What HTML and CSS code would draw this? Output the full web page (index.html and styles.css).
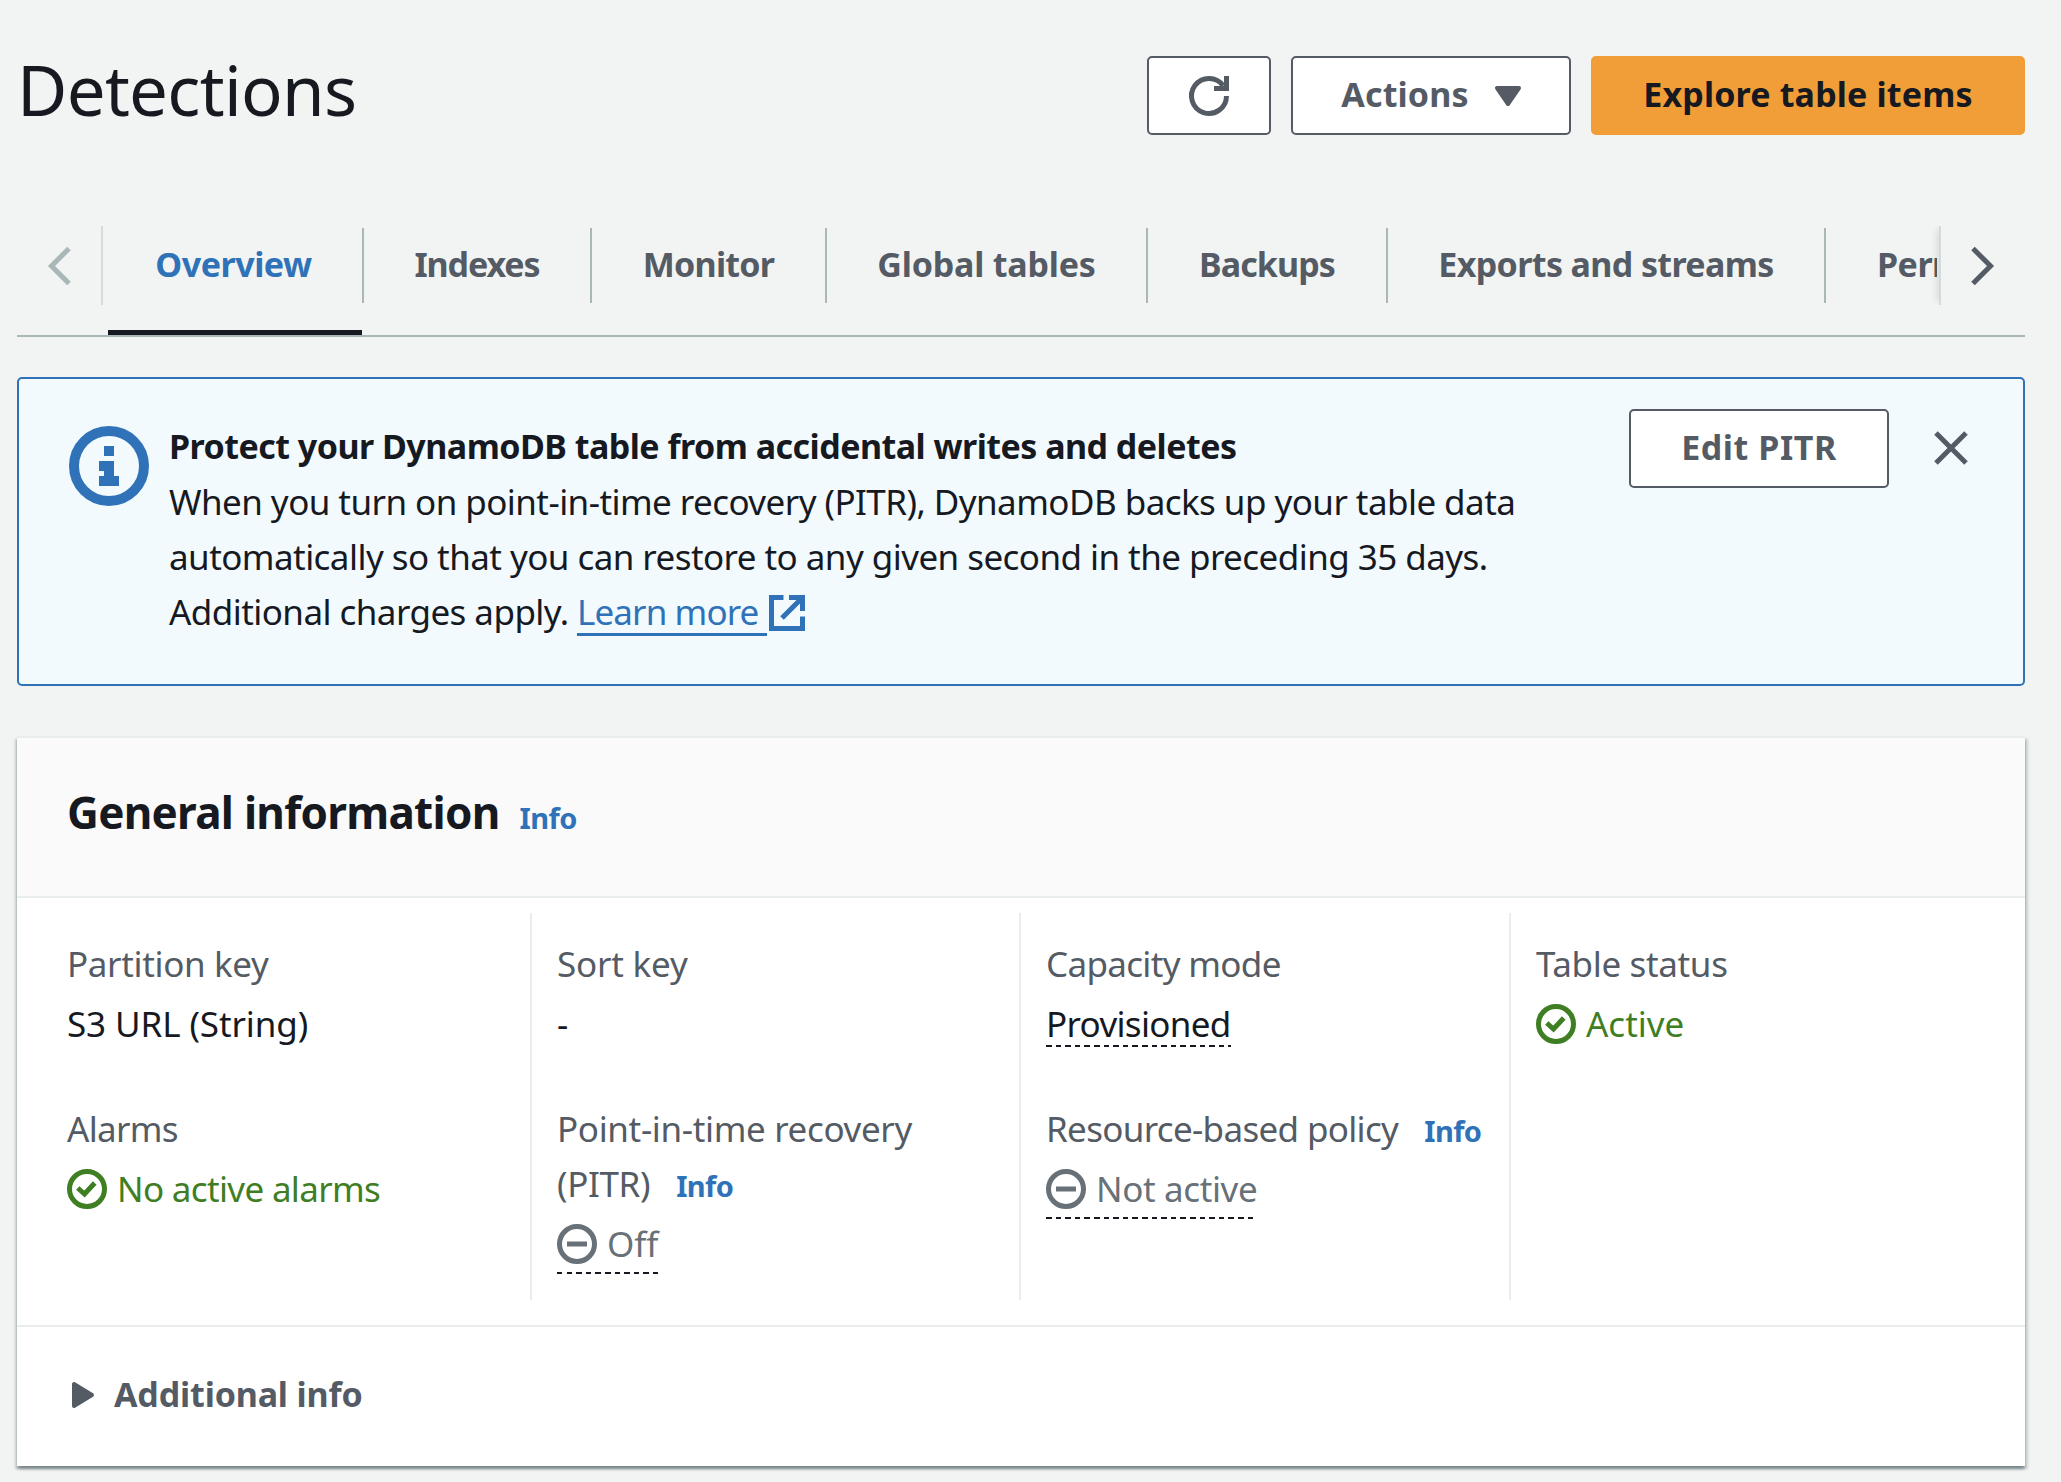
FILE: index.html
```html
<!DOCTYPE html>
<html lang="en">
<head>
<meta charset="utf-8">
<title>Detections</title>
<link rel="stylesheet" href="styles.css">
</head>
<body>
<main class="page">
  <header class="page-header">
    <h1 class="page-title">Detections</h1>
    <div class="actions">
      <button class="btn btn-icon" aria-label="Refresh">
        <svg class="icon" viewBox="0 0 16 16"><path d="M15 8A7 7 0 1 1 13.700 3.900" class="s"/><path d="M15 0v5h-5" class="s"/></svg>
      </button>
      <button class="btn btn-actions"><span>Actions</span>
        <svg class="triangle" viewBox="0 0 26 20"><path d="M2 2h22l-11 16z" class="f round"/></svg>
      </button>
      <button class="btn btn-primary"><span>Explore table items</span></button>
    </div>
  </header>

  <nav class="tabs">
    <button class="scroll scroll-left" aria-label="Scroll left">
      <svg class="icon" viewBox="0 0 16 16"><path d="M12 1L5 8l7 7" class="s"/></svg>
    </button>
    <div class="tab-list">
      <a class="tab active w-overview"><span>Overview</span></a>
      <a class="tab w-indexes"><span>Indexes</span></a>
      <a class="tab w-monitor"><span>Monitor</span></a>
      <a class="tab w-global"><span>Global tables</span></a>
      <a class="tab w-backups"><span>Backups</span></a>
      <a class="tab w-exports"><span>Exports and streams</span></a>
      <a class="tab w-permissions"><span>Permissions</span></a>
    </div>
    <button class="scroll scroll-right" aria-label="Scroll right">
      <svg class="icon" viewBox="0 0 16 16"><path d="M4 1l7 7-7 7" class="s"/></svg>
    </button>
  </nav>

  <section class="flash">
    <svg class="flash-icon" viewBox="0 0 16 16"><circle cx="8" cy="8" r="7" class="s"/><path d="M7 4h2v2H7zM6 7h3v3h1v2H6v-2h1V9H6z" class="f"/></svg>
    <div class="flash-text">
      <div class="flash-title">Protect your DynamoDB table from accidental writes and deletes</div>
      <div>When you turn on point-in-time recovery (PITR), DynamoDB backs up your table data</div>
      <div>automatically so that you can restore to any given second in the preceding 35 days.</div>
      <div class="flash-last"><span>Additional charges apply. </span><a class="link"><span>Learn more</span></a><svg class="ext" viewBox="0 0 36 36"><path d="M14.500 2.500H2.500v31h31V21.500" class="s"/><path d="M20 2.500h13.500V16M33 3L13 23" class="s"/></svg></div>
    </div>
    <button class="btn btn-pitr"><span>Edit PITR</span></button>
    <button class="close" aria-label="Dismiss">
      <svg class="icon" viewBox="0 0 40 40"><path d="M5 5l30 30M35 5L5 35" class="s5"/></svg>
    </button>
  </section>

  <section class="card">
    <div class="card-header"><h2>General information</h2><a class="info">Info</a></div>
    <div class="columns">
      <div class="col">
        <dl class="pair"><dt>Partition key</dt><dd class="t-url">S3 URL (String)</dd></dl>
        <dl class="pair"><dt class="tight">Alarms</dt><dd class="status ok">
          <svg class="icon" viewBox="0 0 16 16"><circle cx="8" cy="8" r="7" class="s"/><path d="M4.300 7.600l2.700 2.400 4.100-4.400" class="s"/></svg><span class="tight">No active alarms</span></dd></dl>
      </div>
      <div class="col">
        <dl class="pair"><dt class="t-sort">Sort key</dt><dd>-</dd></dl>
        <dl class="pair"><dt>Point-in-time recovery<br>(PITR)<a class="info">Info</a></dt><dd><span class="status off dashed">
          <svg class="icon" viewBox="0 0 16 16"><circle cx="8" cy="8" r="7" class="s"/><path d="M4 8h8" class="s"/></svg><span>Off</span></span></dd></dl>
      </div>
      <div class="col">
        <dl class="pair"><dt class="tight">Capacity mode</dt><dd><span class="dashed-text tight">Provisioned</span></dd></dl>
        <dl class="pair"><dt><span class="tight">Resource-based policy</span><a class="info">Info</a></dt><dd><span class="status off dashed">
          <svg class="icon" viewBox="0 0 16 16"><circle cx="8" cy="8" r="7" class="s"/><path d="M4 8h8" class="s"/></svg><span class="t-not">Not active</span></span></dd></dl>
      </div>
      <div class="col">
        <dl class="pair"><dt>Table status</dt><dd class="status ok">
          <svg class="icon" viewBox="0 0 16 16"><circle cx="8" cy="8" r="7" class="s"/><path d="M4.300 7.600l2.700 2.400 4.100-4.400" class="s"/></svg><span>Active</span></dd></dl>
      </div>
    </div>
    <div class="card-footer">
      <svg class="caret" viewBox="0 0 22 26"><path d="M2 2v22l18-11z" class="f round"/></svg><span>Additional info</span>
    </div>
  </section>
</main>
</body>
</html>
```
FILE: styles.css
```css
* { box-sizing: border-box; }
body {
  margin: 0;
  background: #f2f4f3;
  color: #16191f;
  font: 35px/55px "Noto Sans", "Open Sans", sans-serif;
}
.page { padding: 56px 36px 0 17px; height: 1482px; overflow: hidden; }
h1, h2, dl, dd { margin: 0; }
button { font: inherit; color: inherit; padding: 0; border: 0; background: none; }
svg { display: block; flex: none; overflow: visible; }
.s { fill: none; stroke: currentColor; stroke-width: 2; }
.ext .s, .s5 { fill: none; stroke: currentColor; stroke-width: 5; }
.f { fill: currentColor; }
.round { stroke: currentColor; stroke-width: 4; stroke-linejoin: round; }
.icon { width: 40px; height: 40px; }

.page-header { display: flex; justify-content: space-between; height: 170px; }
.page-title { font-size: 69px; font-weight: 400; line-height: 90px; margin-top: -12px; letter-spacing: -.7px; }
.actions { display: flex; gap: 20px; }
.btn {
  height: 79px;
  display: flex;
  align-items: center;
  justify-content: center;
  border: 2px solid #545b64;
  border-radius: 5px;
  background: #fff;
  color: #545b64;
  font-size: 34px;
  font-weight: 700;
  letter-spacing: .15px;
  white-space: nowrap;
}
.btn span { margin-top: -3px; }
.btn-icon { width: 124px; }
.btn-actions { width: 280px; gap: 26px; }
.triangle { width: 26px; height: 20px; }
.btn-primary { width: 434px; background: #f19e39; border-color: #f19e39; color: #16191f; }

.tabs { display: flex; height: 111px; border-bottom: 2px solid #aab7b8; }
.scroll { height: 79px; display: flex; align-items: center; justify-content: center; flex: none; color: #545b64; }
.scroll-left { width: 86px; color: #aab7b8; border-right: 2px solid #d5dbdb; }
.scroll-right { width: 86px; border-left: 2px solid #d5dbdb; box-shadow: -5px 0 8px -4px rgba(0,28,36,.15); clip-path: inset(0 0 0 -15px); }
.tab-list { flex: 1; min-width: 0; display: flex; overflow: hidden; padding: 2px 0 0 5px; margin-right: 2px; width: 0; }
.scroll-right { margin-left: 0; }
.tab {
  flex: none;
  display: flex;
  justify-content: center;
  height: 75px;
  line-height: 73px;
  border-right: 2px solid #aab7b8;
  font-size: 34px;
  font-weight: 700;
  color: #545b64;
  white-space: nowrap;
}
.tab.active { color: #2f72b8; position: relative; }
.tab.active::after { content: ""; position: absolute; left: 0; right: 0; top: 102px; height: 5px; background: #16191f; }
.w-overview { width: 256px; letter-spacing: -.48px; padding-right: 3px; }
.w-indexes { width: 228px; letter-spacing: -1.1px; }
.w-monitor { width: 235px; letter-spacing: -.75px; }
.w-global { width: 321px; letter-spacing: -.2px; }
.w-backups { width: 240px; letter-spacing: -.9px; }
.w-exports { width: 438px; letter-spacing: -.62px; }
.w-permissions { width: 320px; justify-content: flex-start; padding-left: 51px; letter-spacing: -.5px; }

.flash {
  display: flex;
  align-items: flex-start;
  height: 309px;
  margin-top: 40px;
  padding: 30px 50px;
  border: 2px solid #2f72b8;
  border-radius: 5px;
  background: #f2fafe;
}
.flash-icon { width: 80px; height: 80px; margin-top: 17px; color: #2f72b8; }
.flash-text { flex: 1; margin: 10px 0 0 20px; white-space: nowrap; letter-spacing: -.56px; }
.flash-title { font-size: 34px; font-weight: 700; letter-spacing: -.53px; }
.flash-last { display: flex; white-space: pre; }
.link { color: #2f72b8; border-bottom: 3px solid #2f72b8; height: 52px; width: 190px; letter-spacing: -.9px; }
.ext { width: 36px; height: 36px; margin: 11px 0 0 2px; color: #2f72b8; }
.btn-pitr { width: 260px; letter-spacing: .55px; }
.close { margin: 19px 2px 0 42px; color: #545b64; }

.card {
  height: 730px;
  margin-top: 50px;
  background: #fff;
  border-top: 2px solid #eaeded;
  box-shadow: 0 2.500px 2.500px 0 rgba(0,28,36,.3), 2.500px 2.500px 2.500px 0 rgba(0,28,36,.15), -2.500px 2.500px 2.500px 0 rgba(0,28,36,.15);
}
.card-header {
  height: 160px;
  display: flex;
  align-items: baseline;
  gap: 20px;
  padding: 44px 50px 0;
  background: #fafafa;
  border-bottom: 2px solid #eaeded;
}
h2 { font-size: 44px; line-height: 60px; font-weight: 700; letter-spacing: -.72px; }
.info { font-size: 29px; line-height: 30px; font-weight: 700; color: #2f72b8; letter-spacing: -.6px; }
.columns { display: grid; grid-template-columns: 513px 489px 490px 1fr; height: 427px; padding: 15px 0 25px; }
.col { display: flex; flex-direction: column; gap: 50px; padding: 23px 0 0 25px; border-left: 2px solid #eaeded; white-space: nowrap; }
.col:first-child { border-left: 0; padding-left: 50px; }
dt { color: #545b64; margin-bottom: 5px; letter-spacing: -.35px; }
dt .info { margin-left: 26px; }
.t-url { letter-spacing: -.1px; }
.t-sort { letter-spacing: -.2px; }
.t-not { letter-spacing: -.38px; }
.tight { letter-spacing: -.67px; }
.status { display: flex; align-items: center; gap: 10px; height: 55px; }
.ok { color: #3f7e23; }
.off { color: #687078; }
.dashed, .dashed-text {
  width: max-content;
  background: repeating-linear-gradient(90deg, #16191f 0 5.500px, transparent 5.500px 9.600px) left bottom / 100% 2px no-repeat;
}
.dashed { height: 58px; padding-bottom: 3px; }
.dashed-text { display: block; height: 51px; margin-bottom: 4px; }
.card-footer {
  height: 141px;
  display: flex;
  align-items: center;
  gap: 20px;
  padding: 0 55px 4px;
  border-top: 2px solid #eaeded;
  color: #545b64;
  font-size: 34px;
  font-weight: 700;
  letter-spacing: -.16px;
}
.caret { width: 22px; height: 26px; }
```
